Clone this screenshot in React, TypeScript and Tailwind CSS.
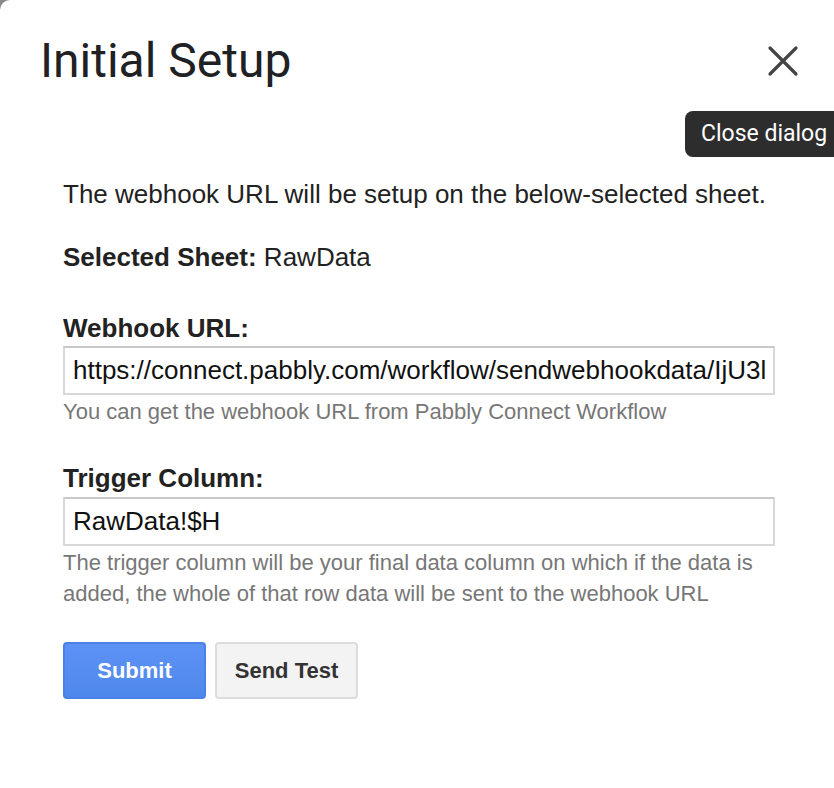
const body = "font-['Liberation_Sans',Arial,sans-serif]";

export default function App() {
  return (
    <div className="relative h-[788px] w-[834px] overflow-hidden bg-[#8a8a8a]">
      <div className="h-full bg-white rounded-tl-[10px]">
        {/* Header */}
        <div className="flex items-start justify-between pl-[40px] pr-[34px] pt-[29px]">
          <h1 className="font-['Roboto',sans-serif] text-[48px] leading-[64px] text-[#202124]">Initial Setup</h1>
          <button className="mt-[15px] text-[#444]">
            <svg width="34" height="34" viewBox="0 0 34 34">
              <path d="M4 4 L30 30 M30 4 L4 30" stroke="currentColor" strokeWidth="3.2" strokeLinecap="round" />
            </svg>
          </button>
        </div>

        <div className={`${body} pl-[63px] pr-[59px] pt-[86px] text-[#222]`}>
          <p className="text-[26px] leading-[30px]">The webhook URL will be setup on the below-selected sheet.</p>
          <p className="mt-[33px] text-[26px] leading-[30px]"><b>Selected Sheet:</b> RawData</p>

          <label className="mt-[41px] block text-[26px] font-bold leading-[30px]">Webhook URL:</label>
          <div className="mt-[3px] h-[49px] overflow-hidden whitespace-nowrap border-2 border-[#d8d8d8] border-t-[#c8c8c8] px-[8px] text-[26px] leading-[45px] text-[#111]">
            https://connect.pabbly.com/workflow/sendwebhookdata/IjU3l
          </div>
          <p className="mt-[1px] text-[22px] leading-[31px] text-[#777]">You can get the webhook URL from Pabbly Connect Workflow</p>

          <label className="mt-[36px] block text-[26px] font-bold leading-[30px]">Trigger Column:</label>
          <div className="mt-[4px] h-[49px] overflow-hidden whitespace-nowrap border-2 border-[#d8d8d8] border-t-[#c8c8c8] px-[8px] text-[26px] leading-[45px] text-[#111]">
            RawData!$H
          </div>
          <p className="mt-[1px] text-[22px] leading-[31px] text-[#777]">
            The trigger column will be your final data column on which if the data is added, the whole of that row data will be sent to the webhook URL
          </p>

          <div className="mt-[33px] flex gap-[9px]">
            <button className="h-[57px] w-[143px] rounded-[4px] border-2 border-[#4a80e8] bg-gradient-to-b from-[#5d92f5] to-[#4f88ec] text-[22px] font-bold text-white">Submit</button>
            <button className="h-[57px] w-[143px] rounded-[4px] border-2 border-[#dcdcdc] bg-[#f3f3f3] text-[22px] font-bold text-[#333]">Send Test</button>
          </div>
        </div>
      </div>

      {/* Tooltip over the close button */}
      <div className="absolute left-[685px] top-[111px] flex h-[46px] w-[180px] items-center rounded-[8px] bg-[#2d2d2d] pl-[16px] font-['Roboto',sans-serif] text-[23px] text-white whitespace-nowrap">
        Close dialog
      </div>
    </div>
  );
}
